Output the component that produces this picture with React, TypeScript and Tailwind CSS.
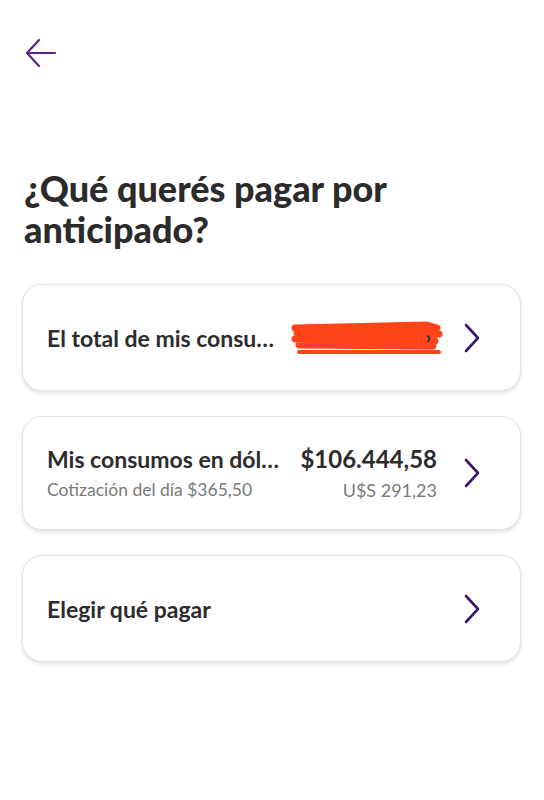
type Option = {
    title: string;
    subtitle?: string;
    amount?: string;
    amountSub?: string;
    redacted?: boolean;
};

const options: Option[] = [
    { title: "El total de mis consu…", redacted: true },
    {
        title: "Mis consumos en dól…",
        subtitle: "Cotización del día $365,50",
        amount: "$106.444,58",
        amountSub: "U$S 291,23",
    },
    { title: "Elegir qué pagar" },
];

function Scribble() {
    return (
        <svg width="154" height="38" viewBox="0 0 154 38" className="-mr-[6px] shrink-0">
            <path d="M6 9 L138 6 L148 9 L8 14 L150 15 L6 20 L146 22 L10 26 L144 27" stroke="#ff4419" strokeWidth="7" strokeLinecap="round" strokeLinejoin="round" fill="none" />
            <path d="M10 33 L150 33" stroke="#ff4419" strokeWidth="4" strokeLinecap="round" fill="none" />
            <path d="M138 17 q4 1 1 6" stroke="#333" strokeWidth="2" fill="none" />
        </svg>
    );
}

function Chevron() {
    return (
        <svg width="18" height="30" viewBox="0 0 18 30" className="shrink-0">
            <path d="M3 2 L15 15 L3 28" stroke="#3c1670" strokeWidth="2.6" strokeLinecap="round" strokeLinejoin="round" fill="none" />
        </svg>
    );
}

function OptionCard({ option }: { option: Option }) {
    const tall = Boolean(option.subtitle);
    return (
        <div
            className={`flex items-center rounded-[20px] border border-[#e3e3e3] bg-white pl-6 pr-[39px] shadow-[0_2px_4px_rgba(0,0,0,0.12)] ${tall ? "min-h-[114px]" : "min-h-[107px]"}`}
        >
            <div className="flex min-w-0 flex-1 items-center justify-between gap-3">
                <div className="min-w-0">
                    <p className="whitespace-nowrap text-[23px] font-bold leading-7 text-[#2c2c2c]">{option.title}</p>
                    {option.subtitle && (
                        <p className="mt-[5px] whitespace-nowrap text-[17.5px] leading-6 text-[#7a7a7a]">{option.subtitle}</p>
                    )}
                </div>
                {option.amount && (
                    <div className="text-right">
                        <p className="whitespace-nowrap text-[24px] font-bold leading-7 text-[#2c2c2c]">{option.amount}</p>
                        <p className="mt-[5px] whitespace-nowrap text-[18px] leading-6 text-[#7a7a7a]">{option.amountSub}</p>
                    </div>
                )}
                {option.redacted && <Scribble />}
            </div>
            <div className="ml-[26px]">
                <Chevron />
            </div>
        </div>
    );
}

export default function App() {
    return (
        <div className="min-h-[800px] w-[544px] bg-white font-['Lato',sans-serif]">
            <div className="pl-[24px] pt-[38px]">
                <svg width="34" height="30" viewBox="0 0 34 30">
                    <path d="M3 15 H31 M15 2 L3 15 L15 28" stroke="#5b2590" strokeWidth="2.2" strokeLinecap="round" strokeLinejoin="round" fill="none" />
                </svg>
            </div>

            <h1 className="mt-[100px] px-6 text-[36px] font-black leading-[41px] text-[#2b2b2b]">
                ¿Qué querés pagar por
                <br />
                anticipado?
            </h1>

            <div className="mt-[34px] flex flex-col gap-[25px] pl-[22px] pr-[23px]">
                {options.map((option) => (
                    <OptionCard key={option.title} option={option} />
                ))}
            </div>
        </div>
    );
}
